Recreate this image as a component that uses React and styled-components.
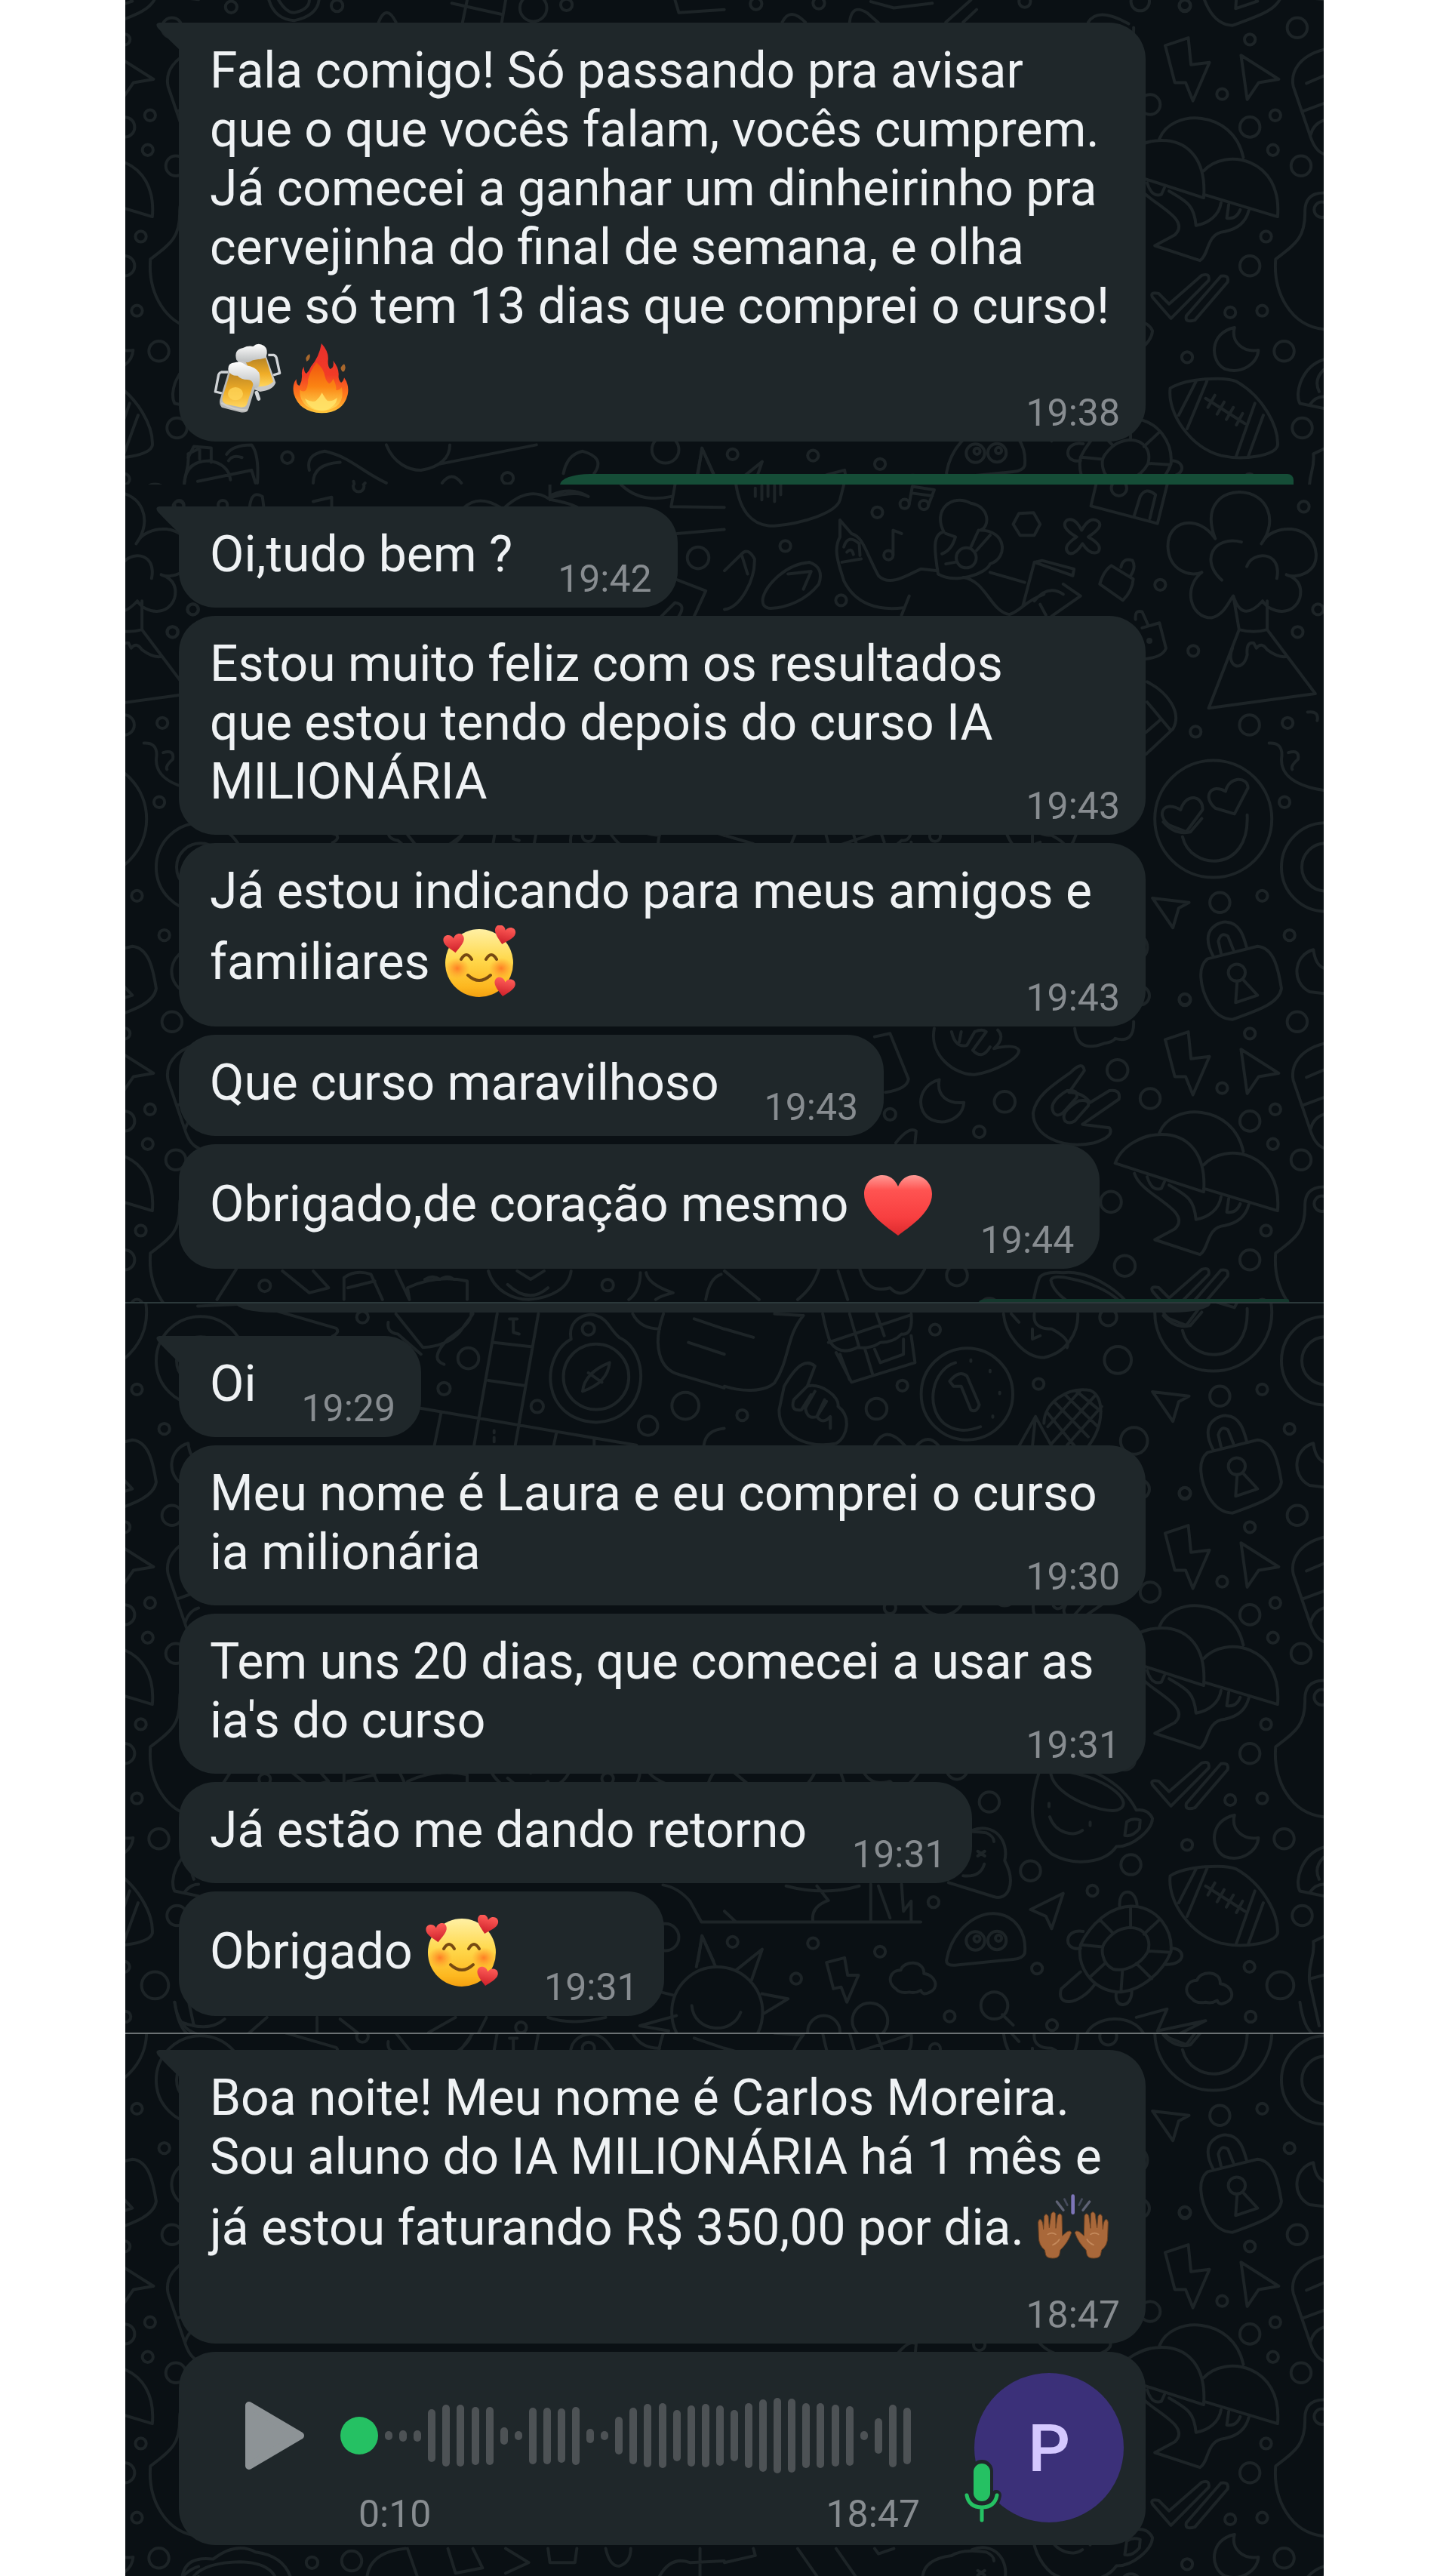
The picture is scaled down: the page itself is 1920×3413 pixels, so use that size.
import React from "react";
import styled, { createGlobalStyle } from "styled-components";

const colors = {
  page: "#ffffff",
  chat: "#0a1014",
  doodle: "#1d2427",
  bubble: "#1f272a",
  text: "#eff2f4",
  time: "#878c90",
  green: "#25c163",
  sent: "#154d37",
  sentFaded: "#14382d",
  bar: "#4d5255",
  play: "#8d9396",
  avatar: "#3b3079",
  initial: "#d4c8ff",
};

const GlobalStyle = createGlobalStyle`
  * {
    box-sizing: border-box;
  }
  body {
    margin: 0;
    background: ${colors.page};
    font-family: Roboto, "Liberation Sans", sans-serif;
  }
`;

const Column = styled.main`
  max-width: 1588px;
  margin: 0 auto;
`;

const Chat = styled.section`
  position: relative;
  overflow: hidden;
  background: ${colors.chat};
  border-top: ${({ $divider }) => ($divider ? `2px solid ${$divider}` : "0")};
`;

const Wallpaper = styled.svg`
  position: absolute;
  inset: 0;
  width: 100%;
  height: 100%;
  fill: none;
  stroke: ${colors.doodle};
  stroke-width: 4px;
  stroke-linecap: round;
  stroke-linejoin: round;

  path,
  ellipse {
    vector-effect: non-scaling-stroke;
  }
`;

const Messages = styled.div`
  position: relative;
  display: flex;
  flex-direction: column;
  align-items: flex-start;
  gap: 11px;
  padding: ${({ $top }) => $top}px 236px ${({ $bottom }) => $bottom}px 71px;
`;

const Bubble = styled.article`
  position: relative;
  display: grid;
  grid-template-columns: ${({ $wide }) => ($wide ? "1fr" : "auto auto")};
  column-gap: 60px;
  width: ${({ $wide }) => ($wide ? "100%" : "auto")};
  padding: 25px 34px 10px 41px;
  border-radius: ${({ $tail }) => ($tail ? "0 48px 48px 48px" : "48px")};
  background: ${colors.bubble};
`;

const Tail = styled.svg`
  position: absolute;
  top: 0;
  left: -30px;
  width: 31px;
  height: 36px;
  fill: ${colors.bubble};
`;

const Body = styled.p`
  grid-area: 1 / 1;
  margin: 0 0 ${({ $timeBelow }) => ($timeBelow ? 33 : 21)}px;
  color: ${colors.text};
  font-size: 66px;
`;

const Line = styled.span`
  display: flex;
  align-items: center;
  min-height: ${({ $tall }) => ($tall ? 109 : 78)}px;
  line-height: 78px;
  white-space: pre;
`;

const Time = styled.time`
  grid-area: ${({ $wide, $below }) =>
    $below ? "2 / 1" : $wide ? "1 / 1" : "1 / 2"};
  align-self: end;
  justify-self: end;
  color: ${colors.time};
  font-size: 50px;
  line-height: 56px;
`;

const Emoji = styled.svg`
  width: 98px;
  height: 98px;
  flex: none;
`;

const SentEdge = styled.div`
  position: relative;
  height: ${({ $height }) => $height}px;
  margin: 0 ${({ $right }) => $right}px 0 ${({ $left }) => $left}px;
  border-radius: 40px 8px 0 0 / 14px 8px 0 0;
  background: ${({ $faded }) => ($faded ? colors.sentFaded : colors.sent)};
`;

const ReceivedEdge = styled.div`
  position: relative;
  height: 12px;
  margin: 0 150px 0 147px;
  border-radius: 0 0 50px 50px / 0 0 12px 12px;
  background: ${colors.bubble};
`;

const VoiceBubble = styled.article`
  display: flex;
  align-items: flex-start;
  width: 100%;
  padding: 28px 29px 13px 86px;
  border-radius: 48px;
  background: ${colors.bubble};
`;

const PlayButton = styled.button`
  margin: 37px 0 0;
  padding: 0;
  border: 0;
  background: none;
  line-height: 0;
  cursor: pointer;
`;

const Track = styled.div`
  display: flex;
  flex-direction: column;
  gap: 26px;
  width: 768px;
  margin: 0 auto 0 46px;
  padding-top: 33px;
`;

const Wave = styled.div`
  display: flex;
  align-items: center;
  justify-content: space-between;
  height: 100px;
  padding-right: 12px;
`;

const Knob = styled.span`
  width: 50px;
  height: 50px;
  border-radius: 50%;
  background: ${colors.green};
`;

const Bar = styled.span`
  width: 10px;
  border-radius: 5px;
  background: ${colors.bar};
`;

const TrackTimes = styled.div`
  display: flex;
  justify-content: space-between;
  color: ${colors.time};
  font-size: 50px;
  line-height: 56px;
  padding-left: 24px;
`;

const Avatar = styled.div`
  position: relative;
  display: flex;
  align-items: center;
  justify-content: center;
  width: 198px;
  height: 198px;
  border-radius: 50%;
  background: ${colors.avatar};
  color: ${colors.initial};
  font-size: 88px;
  font-weight: 500;
`;

const MicBadge = styled.svg`
  position: absolute;
  left: -18px;
  bottom: -8px;
  width: 56px;
  height: 92px;
`;

const HEART = "M0 9 C-4 5 -11 0 -11 -5 C-11 -12 -2 -12 0 -6 C2 -12 11 -12 11 -5 C11 0 4 5 0 9 Z";

const Beers = () => (
  <Emoji viewBox="18 28 294 294" role="img" aria-label="Canecas de cerveja">
    <defs>
      <linearGradient id="beer" x1="0" y1="0" x2="0" y2="1">
        <stop offset="0" stopColor="#b98524" />
        <stop offset=".55" stopColor="#f0ad27" />
        <stop offset="1" stopColor="#ffd65f" />
      </linearGradient>
      <linearGradient id="foam" x1="0" y1="0" x2="0" y2="1">
        <stop offset="0" stopColor="#ffffff" />
        <stop offset="1" stopColor="#b9bcbd" />
      </linearGradient>
    </defs>
    <path d="M250 86 L272 86 Q280 88 283 98 L296 158 L270 166" fill="none" stroke="#d3d6d9" strokeWidth="10" strokeLinejoin="round" />
    <path d="M128 104 L240 84 L280 196 Q270 225 218 232 L160 210 Z" fill="#c9c9c8" />
    <path d="M160 112 L240 98 L270 192 Q250 212 210 212 Z" fill="url(#beer)" />
    <path d="M124 106 Q112 64 150 58 Q170 48 190 52 Q210 34 234 50 Q252 64 242 94 Q222 108 196 100 Q168 126 150 110 Q134 118 124 106 Z" fill="url(#foam)" />
    <path d="M92 154 L64 154 Q56 156 53 164 L40 232 L66 238" fill="none" stroke="#cfd3d6" strokeWidth="10" strokeLinejoin="round" />
    <path d="M96 140 L58 264 Q54 288 70 296 L140 314 Q166 318 172 300 L208 184 Z" fill="#b8b9b8" />
    <path d="M100 152 L68 258 Q66 274 84 282 L144 294 Q162 294 166 280 L194 192 Z" fill="url(#beer)" />
    <ellipse cx="120" cy="240" rx="30" ry="26" fill="#ffd75c" opacity=".75" />
    <path d="M92 150 Q86 118 118 116 Q140 108 164 128 Q200 134 214 156 Q220 176 214 206 Q206 224 192 212 Q190 184 168 184 Q142 184 128 168 Q104 170 92 150 Z" fill="url(#foam)" />
    <path d="M204 236 L212 260" stroke="#d4d6d8" strokeWidth="15" strokeLinecap="round" />
    <path d="M64 276 Q110 304 168 306" fill="none" stroke="#d6d6d2" strokeWidth="7" opacity=".7" />
  </Emoji>
);

const Fire = () => (
  <Emoji viewBox="312 28 294 294" role="img" aria-label="Fogo">
    <defs>
      <linearGradient id="flame" x1="0" y1="0" x2="0" y2="1">
        <stop offset="0" stopColor="#e82f2c" />
        <stop offset=".45" stopColor="#f23b26" />
        <stop offset=".75" stopColor="#ff7d1b" />
        <stop offset="1" stopColor="#ffc83c" />
      </linearGradient>
      <linearGradient id="flameCore" x1="0" y1="0" x2="0" y2="1">
        <stop offset="0" stopColor="#f0540f" />
        <stop offset=".5" stopColor="#fb8413" />
        <stop offset="1" stopColor="#ffde58" />
      </linearGradient>
    </defs>
    <path d="M403 112 Q394 94 414 82 Q420 92 411 106 Z M544 152 Q530 134 552 122 Q562 134 552 152 Z" fill="#a8672c" />
    <path d="M462 40 Q492 74 488 106 Q486 130 496 142 Q514 136 508 108 Q532 138 530 166 Q528 186 540 196 Q550 190 552 176 Q574 206 566 244 Q548 316 462 317 Q372 312 352 240 Q344 204 362 182 Q362 206 374 208 Q386 190 384 164 Q382 146 392 132 Q392 156 402 160 Q414 148 420 132 Q452 96 462 40 Z" fill="url(#flame)" />
    <path d="M442 116 Q470 138 476 172 Q480 190 492 200 Q504 194 508 180 Q522 204 520 226 Q536 226 542 214 Q554 262 522 290 Q460 326 402 288 Q372 262 376 224 Q388 236 400 226 Q410 206 408 186 Q416 150 442 116 Z" fill="url(#flameCore)" />
    <path d="M464 236 Q478 262 486 268 Q506 272 524 256 Q522 292 470 308 Q412 304 396 260 Q424 276 440 268 Q456 254 464 236 Z" fill="#ffe36a" opacity=".85" />
  </Emoji>
);

const LoveFace = () => (
  <Emoji viewBox="0 0 98 98" role="img" aria-label="Rosto sorridente com corações">
    <defs>
      <linearGradient id="skin" x1="0" y1="0" x2="0" y2="1">
        <stop offset="0" stopColor="#fff0a4" />
        <stop offset=".45" stopColor="#ffd84c" />
        <stop offset=".85" stopColor="#fdb71f" />
        <stop offset="1" stopColor="#f3a010" />
      </linearGradient>
      <radialGradient id="cheek">
        <stop offset="0" stopColor="#ff7d26" />
        <stop offset="1" stopColor="#ff9a26" stopOpacity="0" />
      </radialGradient>
      <linearGradient id="smallHeart" x1="0" y1="0" x2="0" y2="1">
        <stop offset="0" stopColor="#ff5d58" />
        <stop offset="1" stopColor="#cd1f29" />
      </linearGradient>
    </defs>
    <circle cx="49" cy="50" r="45" fill="url(#skin)" />
    <ellipse cx="20" cy="57" rx="16" ry="14" fill="url(#cheek)" />
    <ellipse cx="78" cy="57" rx="16" ry="14" fill="url(#cheek)" />
    <path d="M25 45 Q32 33 39 45 M58 45 Q65 33 72 45 M34 66 Q49 80 64 66" fill="none" stroke="#774a12" strokeWidth="4" strokeLinecap="round" />
    <g fill="url(#smallHeart)">
      <path d={HEART} transform="translate(16 25) rotate(-8) scale(1.25)" />
      <path d={HEART} transform="translate(82 14) rotate(14) scale(1.25)" />
      <path d={HEART} transform="translate(82 83) rotate(10) scale(1.25)" />
    </g>
  </Emoji>
);

const RedHeart = () => (
  <Emoji viewBox="0 0 98 98" role="img" aria-label="Coração vermelho">
    <defs>
      <linearGradient id="bigHeart" x1="0" y1="0" x2="0" y2="1">
        <stop offset="0" stopColor="#ff9a95" />
        <stop offset=".25" stopColor="#ff5351" />
        <stop offset=".7" stopColor="#f83f40" />
        <stop offset="1" stopColor="#dc2a2e" />
      </linearGradient>
    </defs>
    <path d="M49 90 C36 80 4 60 4 35 C4 10 38 -1 49 25 C60 -1 94 10 94 35 C94 60 62 80 49 90 Z" fill="url(#bigHeart)" />
  </Emoji>
);

const HAND =
  "M68 268 Q44 250 44 216 L42 158 Q44 144 52 147 Q60 150 63 186 L66 134 Q73 118 82 134 L86 180 L94 124 Q103 110 111 124 L112 182 L119 132 Q128 116 136 132 L138 212 L156 196 Q172 188 174 200 Q160 240 130 268 L126 288 Q120 302 98 301 Q76 300 72 288 Z";

const RaisedHands = () => (
  <Emoji viewBox="34 34 294 294" role="img" aria-label="Mãos para cima">
    <g stroke="#6c4120" strokeWidth="3" fill="#a9683a">
      <path d={HAND} />
      <path d={HAND} transform="translate(362 0) scale(-1 1)" />
    </g>
    <g fill="none" stroke="#c58a5c" strokeWidth="5" strokeLinecap="round">
      <path d="M80 206 Q96 196 112 206 M100 248 Q118 240 126 226 M282 206 Q266 196 250 206 M262 248 Q244 240 236 226" />
    </g>
    <g fill="none" strokeLinecap="round">
      <path d="M180 54 V120" stroke="#7d75b8" strokeWidth="14" />
      <path d="M116 76 L142 110 M246 76 L220 110" stroke="#5e6274" strokeWidth="10" />
      <path d="M146 66 L158 90 M216 66 L204 90" stroke="#464b5c" strokeWidth="8" />
    </g>
  </Emoji>
);

// Each group is drawn on its own grid and scaled into the wallpaper tile.
// rings: [cx, cy, radius]
const doodles = [
  {
    at: [794, -60],
    sy: 0.4464,
    d: `M1145 68 L1205 45 L1212 125 L1260 118 L1217 232 L1198 178 L1170 178 Z
      M1342 97 L1440 168 L1388 178 L1358 228 Z
      M1130 345 C1160 255 1320 255 1348 400
      M1015 435 C1050 325 1260 290 1245 520 Z
      M1245 440 C1300 370 1450 400 1437 576 L1245 510
      M1065 465 C1080 530 1220 575 1170 630 L1118 662 L1235 706 C1260 690 1250 625 1300 620 C1335 612 1355 590 1362 558
      M1098 475 Q1110 520 1135 510 L1143 490
      M1155 500 C1200 530 1220 540 1225 602 C1260 595 1285 570 1290 535
      M1310 540 L1305 580 Q1330 585 1340 555
      M1557 80 C1490 100 1470 150 1478 190 L1520 330 C1530 370 1545 385 1557 390
      M1512 180 L1557 158 M1505 262 L1557 240 M1557 290 Q1530 300 1522 335
      M1557 505 C1520 505 1508 530 1508 560 C1510 640 1480 660 1432 702 C1425 800 1470 900 1557 910
      M1112 815 Q1105 798 1128 804 L1155 835 L1240 750 Q1262 742 1258 765 L1160 878 Z
      M1200 870 L1290 752 Q1312 748 1307 770 L1222 883 Q1195 892 1200 870 Z
      M1325 905 C1260 920 1260 1005 1300 1028 C1345 1045 1385 1010 1387 972 C1350 980 1315 950 1325 905 Z
      M1158 1085 C1200 1055 1300 1050 1330 1065 C1400 1110 1440 1200 1437 1255 C1430 1285 1350 1300 1290 1285 C1210 1260 1150 1160 1158 1085 Z
      M1225 1065 L1180 1165 M1254 1062 L1202 1205 M1378 1130 L1330 1285 M1400 1165 L1360 1290
      M1250 1115 L1352 1190 M1274 1106 L1256 1142 M1298 1126 L1280 1162 M1322 1142 L1304 1178 M1346 1160 L1330 1194
      M818 775 C790 870 790 960 850 1020 C910 1060 990 1045 1018 998 C1060 1000 1110 950 1112 915 Q1100 885 1070 890 C1030 800 930 750 880 760 Q830 755 818 775 Z
      M848 783 C860 850 980 900 1020 890 C1070 870 1000 800 900 778 Q850 765 848 783
      M845 910 C860 960 910 970 930 950 M843 870 V880 M950 926 V936
      M1045 925 Q1060 912 1080 920 L1078 945 Q1060 970 1040 965 Z
      M643 950 C700 925 740 980 728 1040 C760 1110 735 1160 700 1147 L582 1105 M620 1085 Q665 1090 675 1050 M658 1012 L676 1026 M676 1012 L658 1026
      M795 1185 L880 1137 L850 1242 L835 1205 Z
      M1060 1175 C1130 1180 1165 1250 1160 1310 C1140 1370 1080 1430 1020 1430 C950 1420 915 1350 925 1290 C950 1230 1000 1175 1060 1175 Z
      M1055 1238 C1090 1240 1110 1270 1100 1310 C1080 1350 1040 1370 1010 1362 C980 1345 975 1300 990 1280 C1010 1250 1030 1240 1055 1238 Z
      M1055 1175 V1238 M1130 1215 L1090 1258 M1158 1312 L1102 1308 M1110 1390 L1070 1345 M1030 1430 L1034 1366 M950 1385 L988 1345 M928 1290 L982 1296 M975 1215 L1010 1256
      M1027 1180 C1020 1118 1070 1118 1072 1175 M932 1250 C880 1240 880 1310 925 1300 M960 1410 C920 1470 860 1475 875 1420 L925 1370
      M1018 1432 C1010 1480 1060 1480 1058 1425 M1160 1300 C1200 1300 1200 1350 1145 1348
      M577 1335 C590 1250 650 1195 700 1197 C760 1200 785 1260 780 1315 Q775 1330 750 1333 L600 1350 Q575 1352 577 1335 Z
      M1215 1450 C1190 1430 1200 1395 1228 1395 C1235 1365 1290 1365 1288 1405 C1320 1410 1330 1450 1300 1462 Q1285 1470 1280 1455 Q1265 1465 1250 1460 Q1225 1465 1215 1450 Z
      M445 1420 C420 1400 430 1365 458 1365 C465 1335 520 1335 518 1375 C550 1380 560 1420 530 1432 Q515 1440 510 1425 Q495 1435 480 1430 Q455 1435 445 1420 Z
      M265 1342 L312 1328 L320 1380 L348 1380 L318 1460 L303 1415 L283 1420 Z
      M722 1497 L750 1528
      M30 1365 L98 1303 L70 1395 M97 1435 L165 1450 L100 1495 M-73 1355 L-58 1265 L-23 1355 M-130 1440 L-165 1430 M-125 1500 L-220 1530 L-145 1545
      M-85 1470 C-80 1550 20 1560 42 1490
      M-60 1222 H510 M230 1222 C225 1190 240 1170 270 1158 L240 1115 M160 1115 Q260 1145 350 1115 M380 1110 V1220 M400 1115 L430 1210 M460 1110 L465 1190 L485 1160 V1220 M0 1190 L30 1222
      M-160 1112 Q-120 1120 -90 1160 L-60 1222
      M940 1555 C960 1500 1060 1490 1090 1555 M1070 1505 L1150 1480 L1125 1545 L1250 1515 L1180 1555
      M1557 1265 L1530 1280 C1535 1330 1515 1340 1520 1400 L1545 1530 M1523 1390 L1557 1380 M1495 1460 C1500 1500 1510 1540 1530 1555
      M1557 1000 C1500 1020 1480 1100 1495 1130 L1557 1145 M1557 1030 Q1530 1060 1545 1095 M1520 1135 Q1535 1110 1557 1110`,
    rings: [
      [1293, 212, 14], [1431, 275, 14], [1425, 378, 14], [1365, 50, 14], [1407, 635, 14], [1314, 860, 14],
      [1397, 855, 14], [1202, 993, 14], [956, 1129, 14], [543, 1163, 14], [21, 1281, 14], [230, 1285, 14],
      [404, 1310, 14], [186, 1390, 14], [812, 1360, 14], [585, 1502, 14], [851, 1528, 14], [1364, 1355, 14],
      [1367, 1503, 14], [1365, 310, 26], [1498, 425, 26], [1106, 243, 26], [1488, 15, 26], [1365, 722, 26],
      [1454, 975, 26], [1056, 1052, 26], [795, 1070, 26], [688, 866, 26], [1501, 1203, 26], [1444, 1410, 35],
      [652, 1278, 24], [708, 1277, 24], [656, 1272, 8], [712, 1270, 8], [701, 1470, 35], [-19, 1490, 118],
      [378, 1515, 46], [258, 1548, 42], [1552, 555, 20],
    ],
  },
  {
    at: [794, -767],
    sy: 0.4464,
    d: `M1275 165 C1240 60 1300 25 1340 27 C1410 30 1440 110 1395 180
      M1275 165 C1230 90 1150 110 1152 190 C1155 260 1210 280 1240 265
      M1395 180 C1420 120 1530 115 1537 210 C1540 270 1480 285 1460 272
      M1240 265 C1190 310 1210 400 1265 400 C1300 390 1310 350 1322 335 C1340 400 1370 385 1398 350 C1420 390 1480 395 1495 340 Q1505 290 1460 272
      M1343 175 C1270 155 1235 230 1292 288 M1357 248 C1370 200 1450 200 1435 283
      M1322 335 L1337 435 L1258 668 L1535 625 L1410 435 V350 M1337 435 Q1375 447 1410 435
      M1320 490 C1300 540 1345 570 1358 510 Q1355 470 1375 475 L1382 490 Q1395 470 1410 495 Q1440 520 1460 515
      M1190 1050 C1210 1150 1365 1160 1358 985
      M1200 1035 L1155 1015 C1120 985 1140 940 1185 970 C1200 915 1245 930 1242 970 Z
      M1325 982 L1275 965 C1240 930 1265 890 1302 915 C1310 870 1360 870 1360 905 Z
      M1112 1232 L1207 1245 L1180 1262 L1165 1320 Z
      M1255 1412 L1385 1375 C1430 1380 1440 1450 1447 1500 C1440 1550 1370 1570 1320 1592 C1260 1590 1240 1500 1238 1470 Q1235 1430 1255 1412 Z
      M1270 1405 C1230 1320 1290 1300 1305 1303 C1340 1305 1350 1350 1357 1380 M1290 1395 L1283 1360 Q1290 1330 1308 1345 L1322 1385
      M1332 1478 L1328 1542 L1385 1520 L1348 1475
      M1530 1385 C1480 1400 1470 1480 1520 1510 L1557 1515 M1530 1385 Q1535 1430 1557 1440
      M765 90 L803 88 L820 122 L805 155 L768 155 L750 122 Z
      M890 110 Q910 100 928 140 Q950 95 972 115 Q985 130 945 160 Q985 185 970 205 Q950 215 930 180 Q910 215 895 208 Q875 190 915 160 Q870 130 890 110 Z
      M965 5 L952 68 L1125 120 L1150 5 M1065 95 L1080 40 Q1095 10 1120 35 L1105 105
      M480 62 L488 10 L545 20 L530 65 M488 30 L540 38 M438 212 V140 L460 150
      M300 110 L330 150 C360 160 365 200 400 275 C430 310 480 270 510 255 L550 260 M300 110 L300 160 C280 200 300 250 310 290 C340 360 400 380 465 370
      M480 335 L460 392 M305 235 L355 225 M310 190 Q320 150 350 180 L352 215 M318 205 Q330 190 335 212
      M555 270 C545 200 540 150 570 145 C540 80 590 30 640 60 C690 70 690 130 665 140 C730 140 740 220 690 240 C680 270 600 300 555 270
      M640 190 L660 140 M655 200 L690 155 M575 150 L600 160 Q590 200 565 210 M575 240 L600 235
      M805 235 L775 365 M805 235 L905 275 L908 255 L825 230 Z M620 280 C680 290 690 380 740 390 C770 380 780 350 830 330 M690 265 L780 295
      M805 350 Q840 300 880 330 M880 300 L925 335 L850 395 M820 360 L835 392
      M1005 245 L1062 285 Q1060 320 1035 348 L975 300 Q985 260 1005 245 Z M1030 250 Q1035 220 1060 230 Q1070 250 1055 275
      M1085 430 L1130 415 L1147 490 Q1140 515 1095 522 M1068 405 Q1065 375 1085 382 L1100 420
      M1098 590 C1150 620 1190 680 1165 730 L1095 805 M1098 650 L1160 735 M1095 740 L1130 705
      M0 260 L45 210 Q60 190 78 225 C80 290 40 370 0 375 M45 215 L60 270
      M100 340 C110 300 160 240 220 235 Q260 250 245 300 C210 350 160 370 120 372 Q95 370 100 340 Z M165 270 L225 262 L205 315
      M30 5 C40 80 70 130 130 127 C200 120 290 90 300 50 L310 5 M80 15 V40 M97 8 V50 M113 5 V40 M130 8 V55 M146 5 V35
      M1415 772 Q1450 770 1448 810 C1440 870 1490 900 1557 912 M1465 800 Q1495 790 1490 820 Q1470 840 1475 850 M1515 680 Q1545 675 1540 705`,
    rings: [
      [1505, 70, 14], [1132, 302, 14], [1218, 498, 14], [1489, 442, 14], [1542, 375, 14], [1224, 738, 14],
      [1463, 712, 14], [1455, 947, 14], [1397, 1225, 14], [1468, 1342, 14], [1196, 1532, 14], [303, 348, 14],
      [158, 187, 14], [397, 87, 14], [468, 62, 12], [518, 65, 12], [426, 214, 12], [1364, 718, 26],
      [1287, 1245, 26], [628, 222, 26], [1025, 15, 20], [1270, 997, 152], [1562, 1140, 115], [1562, 1140, 62],
      [1331, 1453, 22], [1104, 468, 4],
    ],
  },
  {
    at: [-6, -767],
    sy: 0.4464,
    d: `M335 70 Q340 20 368 40 L372 75 M500 55 L548 42 V75 M890 75 Q930 30 990 75 M1115 0 V50 M1000 70 Q1060 10 1110 45 M1110 45 Q1180 20 1215 40 Q1170 10 1120 35 M1120 50 Q1170 60 1190 75
      M1300 5 Q1350 60 1430 40 M1430 70 L1568 72 M1445 150 L1568 138 M1440 285 L1520 320 L1490 395 M1405 395 L1440 355 Q1470 360 1450 395 M1440 5 L1430 70`,
    rings: [[1500, 222, 28], [618, 10, 14], [265, 65, 12], [152, 65, 12], [135, 442, 14], [188, 375, 14]],
  },
  {
    at: [794, -760],
    sy: 0.4464,
    d: `M0 1030 L75 1055 M205 990 C160 1050 170 1120 130 1190 C100 1220 40 1215 0 1200 M130 985 L205 990
      M255 985 Q265 1040 275 1070 Q300 1110 345 1085 Q380 1090 405 1070 Q440 1070 460 1045 Q490 1050 485 985 M270 1070 L480 990 M325 985 L350 1085 M395 985 L415 1050
      M290 1100 L330 1188 L495 1130 L485 1050 M365 1090 L385 1165 M300 1105 L325 1180 M390 1090 L405 1130 L465 1105 V1060
      M155 1200 C190 1130 215 1120 235 1140 L215 1200 C250 1190 300 1230 295 1260 C330 1290 320 1350 290 1370 C220 1385 140 1350 142 1270 Z
      M215 1200 L180 1240 Q170 1275 200 1270 L225 1225 M235 1215 L210 1265 Q215 1300 240 1290 L260 1240 M265 1245 L240 1290 Q255 1315 275 1290 V1325
      M600 1130 C540 1150 520 1260 570 1310 Q610 1345 665 1320 M585 1185 Q610 1150 630 1170 L662 1255 Q655 1280 640 1270 L615 1200 L595 1200 Z
      M640 1122 V1126 M690 1153 V1157 M715 1218 V1222 M697 1288 V1292
      M725 985 C730 1050 780 1115 830 1115 C890 1100 920 1040 918 985 M805 985 Q800 1030 850 1030 Q900 1060 890 1085 M800 1030 V1060 L820 1050 M745 985 L765 1010
      M830 1310 C830 1250 890 1200 950 1212 C990 1230 985 1320 945 1378 M765 1378 L808 1290 L850 1378 M808 1290 L800 1378
      M840 1280 L910 1378 M860 1250 L945 1350 M885 1225 L970 1320 M915 1215 L978 1275 M965 1225 L850 1370 M980 1260 L890 1375 M925 1212 L840 1320
      M390 1375 Q420 1310 470 1378 M500 1375 Q530 1340 555 1375 M1140 990 Q1170 1030 1210 1020 L1240 980`,
    rings: [
      [547, 1032, 14], [462, 1198, 14], [816, 1193, 14], [46, 1286, 14], [395, 1267, 27], [1022, 1122, 35],
      [1064, 1362, 35], [997, 995, 22], [630, 1223, 119],
    ],
  },
  {
    at: [-6, -760],
    sy: 0.4464,
    d: `M1170 1060 C1090 1110 1090 1300 1235 1307 C1375 1300 1380 1100 1295 1055 M1170 1060 C1160 1000 1210 980 1235 990 C1265 1000 1270 1030 1295 1055
      M1200 1215 Q1205 1160 1270 1130 Q1265 1190 1200 1215 Z M1215 1160 L1250 1188
      M978 985 L918 1375 M1085 985 L1025 1375 M970 1070 L1070 1083 M955 1183 L1048 1198 M778 1265 L1340 1375 M832 1280 L815 1375 M1132 1338 L1125 1375 M1230 1358 V1375
      M1010 1000 L1030 1000 M1020 1000 V1040 L1035 1045 M970 1332 V1338 M970 1352 V1365
      M715 985 L785 1085 Q850 1080 880 1040 L915 985 M695 1010 Q690 1040 720 1045 L780 1105 M910 985 Q915 1010 850 1060 Q800 1120 840 1135
      M200 962 L340 955 L560 1028 Q570 1040 550 1052
      M1410 985 C1380 1080 1400 1150 1450 1165 L1568 1205 M1490 1000 L1568 1030 M1475 1070 L1568 1105 M1330 985 Q1350 1030 1400 1030 M1515 1375 Q1520 1330 1568 1325`,
    rings: [
      [903, 1117, 27], [840, 1207, 16], [1082, 1260, 16], [1467, 1258, 35], [1370, 1317, 25], [628, 995, 15],
      [1235, 1172, 85], [1215, 1030, 16],
    ],
  },
  {
    at: [794, -107],
    sy: 0.4464,
    d: `M545 140 C530 220 600 280 650 277 C700 270 765 230 765 205 Q755 185 700 200 C730 170 715 150 710 145 M590 150 Q600 200 630 190 L650 150 M615 150 L610 180 M650 150 Q670 140 680 150 L645 205 Q670 235 690 195
      M900 270 Q930 235 935 265 L895 330 Q930 330 950 360 L1000 325 Q1030 320 1025 350 L930 425 L1000 435 Q1015 460 960 480 C880 500 800 460 802 390 C810 340 850 310 900 270
      M855 390 Q840 360 890 325 Q920 320 915 345 L880 390 Q865 405 855 390 M885 415 Q870 390 920 355 Q950 350 945 370 L910 415 Q895 425 885 415
      M558 292 C500 310 495 390 540 412 C580 430 620 400 622 360 C580 365 550 340 558 292 Z
      M910 140 C915 200 950 200 985 185 Q1010 180 1015 170 Q1065 185 1063 120 M390 165 L430 155 L478 290 Q475 320 418 330 M445 480 Q480 430 498 445 L495 480
      M0 860 L90 945 M245 855 Q230 910 190 945 M295 860 L320 945 M352 855 Q370 930 430 910 Q470 960 520 855`,
    rings: [
      [1021, 264, 27], [728, 358, 27], [1004, 655, 27], [1040, 845, 27], [430, 395, 15], [662, 447, 15], [604, 873, 27],
    ],
  },
  {
    at: [-6, -107],
    sy: 0.4464,
    d: `M300 855 L250 945 M420 860 L490 925 L540 910 L500 860 M580 945 V880 Q610 855 650 870 L680 945 M590 910 L660 890 M715 860 L750 945 L745 910 Q820 870 900 890 V945 M790 885 Q810 870 830 885 Q850 870 865 885
      M955 860 C970 920 1020 945 1060 945 C1120 940 1165 910 1170 860 M1005 900 Q1060 960 1110 910 M1030 860 L1065 885 L1100 860 M1365 865 Q1370 900 1435 925 Q1400 935 1390 945 M1350 865 Q1350 920 1320 945 M1520 945 Q1530 880 1560 870`,
    rings: [[374, 904, 15], [1265, 902, 15]],
  },
  {
    at: [-6, -90],
    sy: 0.421,
    d: `M175 1440 L190 1405 L235 1410 V1455 M205 1408 V1445 M165 1520 Q170 1450 230 1450 Q280 1460 285 1510 M200 1515 L340 1480 L350 1520 M275 1430 Q290 1400 340 1400 Q360 1430 355 1520 M280 1450 Q290 1430 315 1440
      M490 1480 Q480 1430 530 1420 C600 1440 620 1480 690 1520 M500 1520 Q500 1460 570 1455 M605 1515 Q610 1555 635 1520
      M690 1400 C710 1460 750 1480 780 1480 C830 1470 855 1440 855 1400 M830 1460 L1080 1400 M1150 1490 Q1160 1430 1200 1420 Q1260 1440 1230 1490 M1500 1490 L1510 1410 L1540 1490 M835 1520 Q860 1480 885 1520
      M385 0 Q400 60 450 65 Q510 50 515 0 M410 0 Q430 40 450 40 Q490 30 490 0 M900 0 L888 70 M1000 0 L990 70 M860 10 L990 45 M670 70 Q690 10 715 70 M1440 0 L1450 40 L1568 30`,
    rings: [[433, 1440, 15], [1005, 1505, 15], [1415, 1415, 35], [287, 22, 15], [562, 18, 15], [1158, 15, 15], [1072, 25, 35]],
  },
  {
    at: [794, -90],
    sy: 0.421,
    d: `M380 5 L440 25 L540 10 M640 0 L575 70 M655 30 L620 70 M150 70 Q170 20 210 70 M325 70 Q330 10 370 40 L400 72 M945 70 Q970 20 1050 75`,
    rings: [[82, 12, 15], [245, 10, 15], [780, 5, 15], [1080, 5, 24], [1196, 18, 15]],
  },
  {
    at: [-6, -334],
    sy: 0.4675,
    d: `M160 1568 Q170 1510 240 1520 Q300 1470 350 1500 Q420 1510 440 1568 M190 1568 Q220 1530 310 1528 Q380 1530 400 1568 M640 1568 Q650 1500 740 1490 M745 1490 L770 1568 M850 1490 L870 1560 L940 1545 L915 1490
      M1000 1490 L1060 1530 L1000 1560 M1110 1490 L1115 1530 H1180 L1185 1490 M1260 1490 Q1270 1540 1295 1540 Q1325 1530 1325 1490 M1400 1568 Q1430 1510 1480 1530 L1568 1525 M1505 1490 V1568`,
    rings: [[600, 1525, 26], [497, 1530, 15]],
  },
  {
    at: [794, -334],
    sy: 0.4675,
    d: `M0 1530 L80 1510 L75 1490 M190 1490 L240 1568 M290 1490 L340 1568 M390 1490 L400 1505 L440 1490 M515 1568 Q520 1520 590 1510 Q620 1490 680 1500 Q700 1510 700 1525`,
    rings: [],
  },
  {
    at: [-6, -60],
    sy: 0.4464,
    d: `M140 1460 Q150 1540 200 1555 M160 1520 Q230 1550 270 1510 M330 1555 L380 1505 M510 1505 V1555 M570 1510 L620 1555 M800 1550 L870 1505 M930 1550 L950 1505 M1110 1505 Q1170 1530 1260 1505`,
    rings: [[1040, 1535, 14]],
  },
];

const TILE = 1491;

const DoodleTile = () =>
  doodles.map(({ at, sy, d, rings }, i) => (
    <g key={i} transform={`translate(${at[0]} ${at[1]}) scale(.51 ${sy})`}>
      <path d={d} />
      {rings.map(([cx, cy, r], j) => (
        <ellipse key={j} cx={cx} cy={cy} rx={r} ry={(r * 0.51) / sy} />
      ))}
    </g>
  ));

const Doodles = ({ offset }) => (
  <Wallpaper aria-hidden="true">
    <g transform={`translate(0 ${offset})`}>
      <DoodleTile />
    </g>
    <g transform={`translate(${-TILE} ${offset})`}>
      <DoodleTile />
    </g>
  </Wallpaper>
);

// A line is a string, or [text, ...emoji] when it ends with drawings.
const Message = ({ lines, time, wide, tail, timeBelow }) => (
  <Bubble $wide={wide} $tail={tail}>
    {tail && (
      <Tail viewBox="0 0 31 36" aria-hidden="true">
        <path d="M4 0 H31 V36 Q14 20 2 7 Q-2 1 4 0 Z" />
      </Tail>
    )}
    <Body $timeBelow={timeBelow}>
      {lines.map((line, i) => {
        if (typeof line === "string") return <Line key={i}>{line}</Line>;
        const [text, ...emojis] = line;
        return (
          <Line key={i} $tall>
            {text}
            {emojis.map((Icon, j) => (
              <Icon key={j} />
            ))}
          </Line>
        );
      })}
    </Body>
    <Time $wide={wide} $below={timeBelow}>
      {time}
    </Time>
  </Bubble>
);

const levels = [
  12, 15, 15, 70, 82, 82, 77, 77, 23, 12, 75, 75, 72, 77, 19, 12, 50, 75, 84,
  86, 68, 81, 84, 80, 68, 86, 96, 100, 98, 86, 86, 82, 79, 12, 47, 83, 75,
];

const VoiceMessage = () => (
  <VoiceBubble>
    <PlayButton type="button" aria-label="Reproduzir">
      <svg width="82" height="92" viewBox="0 0 82 92">
        <path
          d="M7 6 L75 46 L7 86 Z"
          fill={colors.play}
          stroke={colors.play}
          strokeWidth="10"
          strokeLinejoin="round"
        />
      </svg>
    </PlayButton>
    <Track>
      <Wave>
        <Knob />
        {levels.map((level, i) => (
          <Bar key={i} style={{ height: level }} />
        ))}
      </Wave>
      <TrackTimes>
        <span>0:10</span>
        <time>18:47</time>
      </TrackTimes>
    </Track>
    <Avatar>
      P
      <MicBadge viewBox="0 0 56 92" aria-hidden="true">
        <g fill="none" strokeLinecap="round">
          <path d="M28 17 V45 M9 48 Q11 63 28 63 Q45 63 47 48 M28 63 V81" stroke={colors.bubble} strokeWidth="14" />
          <path d="M28 16 V46" stroke={colors.bubble} strokeWidth="30" />
          <path d="M28 17 V45" stroke={colors.green} strokeWidth="22" />
          <path d="M8 48 Q11 64 28 64 Q45 64 48 48 M28 64 V81" stroke={colors.green} strokeWidth="5" />
        </g>
      </MicBadge>
    </Avatar>
  </VoiceBubble>
);

const App = () => (
  <>
    <GlobalStyle />
    <Column>
      <Chat>
        <Doodles offset={90} />
        <Messages $top={30} $bottom={43}>
          <Message
            wide
            tail
            time="19:38"
            lines={[
              "Fala comigo! Só passando pra avisar",
              "que o que vocês falam, vocês cumprem.",
              "Já comecei a ganhar um dinheirinho pra",
              "cervejinha do final de semana, e olha",
              "que só tem 13 dias que comprei o curso!",
              ["", Beers, Fire],
            ]}
          />
        </Messages>
        <SentEdge $height={14} $left={576} $right={40} />
      </Chat>

      <Chat>
        <Doodles offset={765} />
        <Messages $top={29} $bottom={40}>
          <Message tail time="19:42" lines={["Oi,tudo bem ?"]} />
          <Message
            wide
            time="19:43"
            lines={[
              "Estou muito feliz com os resultados",
              "que estou tendo depois do curso IA",
              "MILIONÁRIA",
            ]}
          />
          <Message
            wide
            time="19:43"
            lines={["Já estou indicando para meus amigos e", ["familiares ", LoveFace]]}
          />
          <Message time="19:43" lines={["Que curso maravilhoso"]} />
          <Message time="19:44" lines={[["Obrigado,de coração mesmo ", RedHeart]]} />
        </Messages>
        <SentEdge $faded $height={4} $left={1131} $right={46} />
      </Chat>

      <Chat $divider="#2c393b">
        <Doodles offset={334} />
        <ReceivedEdge />
        <Messages $top={31} $bottom={22}>
          <Message tail time="19:29" lines={["Oi"]} />
          <Message
            wide
            time="19:30"
            lines={["Meu nome é Laura e eu comprei o curso", "ia milionária"]}
          />
          <Message
            wide
            time="19:31"
            lines={["Tem uns 20 dias, que comecei a usar as", "ia's do curso"]}
          />
          <Message time="19:31" lines={["Já estão me dando retorno"]} />
          <Message time="19:31" lines={[["Obrigado ", LoveFace]]} />
        </Messages>
      </Chat>

      <Chat $divider="#6b7173">
        <Doodles offset={319} />
        <Messages $top={21} $bottom={41}>
          <Message
            wide
            tail
            timeBelow
            time="18:47"
            lines={[
              "Boa noite! Meu nome é Carlos Moreira.",
              "Sou aluno do IA MILIONÁRIA há 1 mês e",
              ["já estou faturando R$ 350,00 por dia. ", RaisedHands],
            ]}
          />
          <VoiceMessage />
        </Messages>
      </Chat>
    </Column>
  </>
);

export default App;
